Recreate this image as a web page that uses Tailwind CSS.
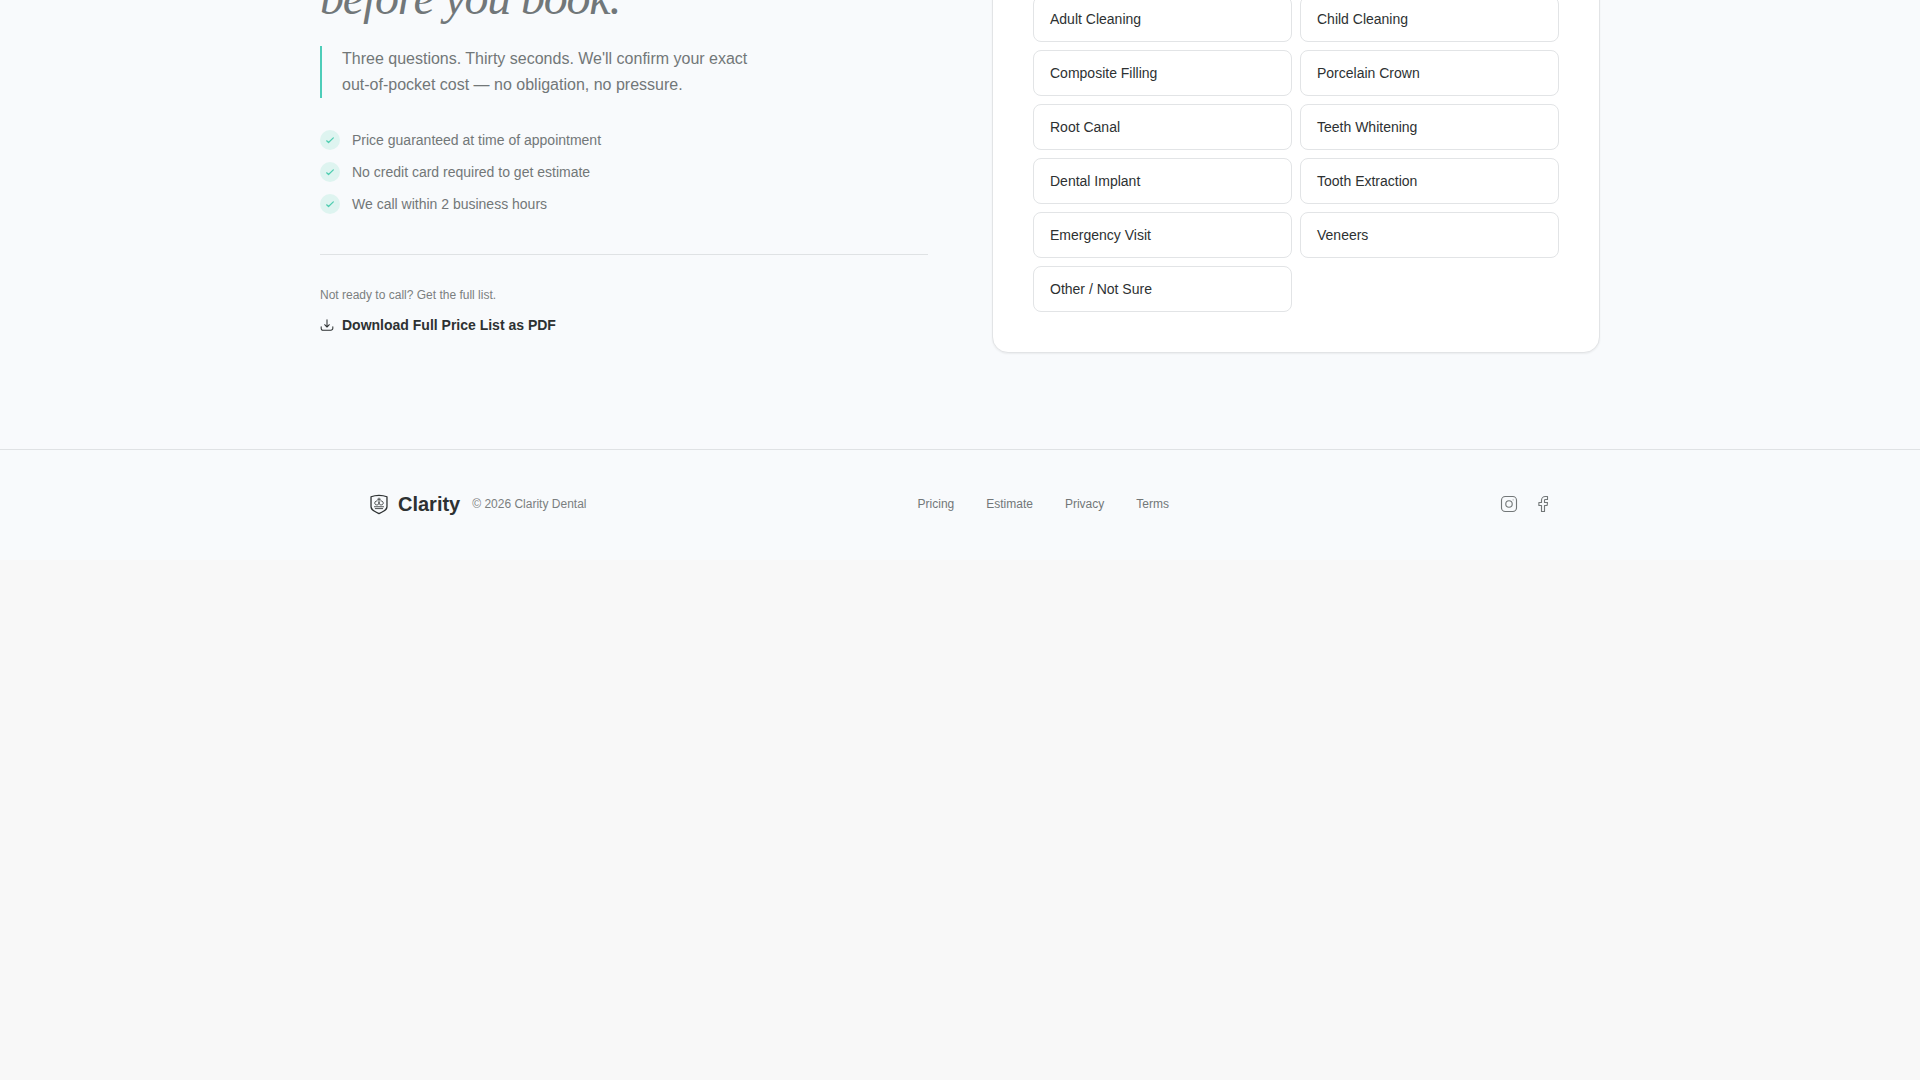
<!DOCTYPE html>
<html lang="en">
<head>
  <meta charset="UTF-8">
  <meta name="viewport" content="width=device-width, initial-scale=1.0">
  <title>Clarity Dental</title>
  <script src="https://cdn.jsdelivr.net/npm/@tailwindcss/browser@4"></script>
</head>
<body class="bg-[#f8f8f8] text-[#2d3132] font-['Liberation_Sans',sans-serif] min-h-screen overflow-hidden">

  <!-- Estimate -->
  <section class="bg-[#f8fafc] h-[449px] flex flex-col justify-end overflow-hidden pb-24">
    <div class="w-full max-w-7xl mx-auto grid grid-cols-2 gap-16 items-end">
      <div class="pb-[18px]">
        <h2 class="font-['Liberation_Serif',serif] italic text-5xl leading-[48px] tracking-[-1.2px] text-[#717779] mb-6">before you book.</h2>
        <p class="border-l-2 border-[#4ecdb9] pl-5 leading-[26px] text-[#727778] mb-8">Three questions. Thirty seconds. We'll confirm your exact<br>out-of-pocket cost — no obligation, no pressure.</p>
        <ul class="flex flex-col gap-3 text-sm text-[#727778]">
          <li class="flex items-center gap-3">
            <span class="size-5 rounded-full bg-[#def4f0] flex items-center justify-center">
              <svg class="size-2.5 text-[#4ecdb0]" viewBox="0 0 24 24" fill="none" stroke="currentColor" stroke-width="3" stroke-linecap="round" stroke-linejoin="round"><path d="M4 14l4.500 4L20 7"/></svg>
            </span>
            Price guaranteed at time of appointment
          </li>
          <li class="flex items-center gap-3">
            <span class="size-5 rounded-full bg-[#def4f0] flex items-center justify-center">
              <svg class="size-2.5 text-[#4ecdb0]" viewBox="0 0 24 24" fill="none" stroke="currentColor" stroke-width="3" stroke-linecap="round" stroke-linejoin="round"><path d="M4 14l4.500 4L20 7"/></svg>
            </span>
            No credit card required to get estimate
          </li>
          <li class="flex items-center gap-3">
            <span class="size-5 rounded-full bg-[#def4f0] flex items-center justify-center">
              <svg class="size-2.5 text-[#4ecdb0]" viewBox="0 0 24 24" fill="none" stroke="currentColor" stroke-width="3" stroke-linecap="round" stroke-linejoin="round"><path d="M4 14l4.500 4L20 7"/></svg>
            </span>
            We call within 2 business hours
          </li>
        </ul>
        <div class="mt-10 pt-8 border-t border-[#dfe2e4]">
          <p class="text-xs text-[#7b7f80] mb-3">Not ready to call? Get the full list.</p>
          <a href="#" class="flex items-center gap-2 text-sm font-bold">
            <svg class="size-3.5" viewBox="0 0 24 24" fill="none" stroke="currentColor" stroke-width="1.8" stroke-linecap="round" stroke-linejoin="round"><path d="M12 3v12M8 11.5l4 4 4-4M2 15v2.500a3.500 3.500 0 0 0 3.500 3.500h13a3.500 3.500 0 0 0 3.500-3.500V15"/></svg>
            Download Full Price List as PDF
          </a>
        </div>
      </div>

      <div class="bg-white border border-[#e2e4e6] rounded-2xl shadow-[0_1px_2px_rgba(0,0,0,0.06)] p-10">
        <div class="grid grid-cols-2 gap-2 text-sm *:border *:border-[#e2e4e6] *:rounded-lg *:px-4 *:py-3 *:text-left">
          <button>Adult Cleaning</button>
          <button>Child Cleaning</button>
          <button>Composite Filling</button>
          <button>Porcelain Crown</button>
          <button>Root Canal</button>
          <button>Teeth Whitening</button>
          <button>Dental Implant</button>
          <button>Tooth Extraction</button>
          <button>Emergency Visit</button>
          <button>Veneers</button>
          <button>Other / Not Sure</button>
        </div>
      </div>
    </div>
  </section>

  <footer class="bg-[#f8fafc] border-t border-[#dfe2e4] pt-10 pb-[42px]">
    <div class="max-w-7xl mx-auto px-12 h-7 flex items-center justify-between">
      <div class="flex items-center gap-3">
        <div class="flex items-center gap-2">
          <!-- shield with a crest -->
          <svg class="size-[22px]" viewBox="0 0 24 24" fill="none" stroke="currentColor" stroke-width="1.400" stroke-linecap="round" stroke-linejoin="round"><path d="M12 2.500c-3 0-6 .5-8.700 1.600V15c0 3.500 3.700 5.200 8.700 7.500 5-2.300 8.700-4 8.700-7.500V4.100C18 3 15 2.500 12 2.500z"/><g stroke-width=".9"><path d="M10 8.500c-3.500 0-3.500 4.500-.5 4.500 2 0 2.500-1 2.500-3 0 2 .5 3 2.500 3 3 0 3-4.500-.5-4.500M12 5.500V10M10.500 6.800h3M7 15h10M8 17h8"/></g></svg>
          <span class="text-xl font-bold">Clarity</span>
        </div>
        <span class="text-xs text-[#7b7f80]">© 2026 Clarity Dental</span>
      </div>
      <nav class="flex gap-8 text-xs text-[#727778]">
        <a href="#">Pricing</a>
        <a href="#">Estimate</a>
        <a href="#">Privacy</a>
        <a href="#">Terms</a>
      </nav>
      <div class="flex gap-4 text-[#727778]">
        <svg class="size-[18px]" viewBox="0 0 24 24" fill="none" stroke="currentColor" stroke-width="1.500"><rect x="2" y="2" width="20" height="20" rx="5"/><circle cx="12" cy="12" r="4.300"/><path stroke-linecap="round" stroke-width="1.200" d="M17.500 6.500h.01"/></svg>
        <svg class="size-[18px]" viewBox="0 0 24 24" fill="none" stroke="currentColor" stroke-width="1.500" stroke-linejoin="round"><path d="M18 2h-3a5 5 0 0 0-5 5v3H6.500v4H10v8h4v-8h3.500l.5-4h-4V7a1 1 0 0 1 1-1h3z"/></svg>
      </div>
    </div>
  </footer>

</body>
</html>
